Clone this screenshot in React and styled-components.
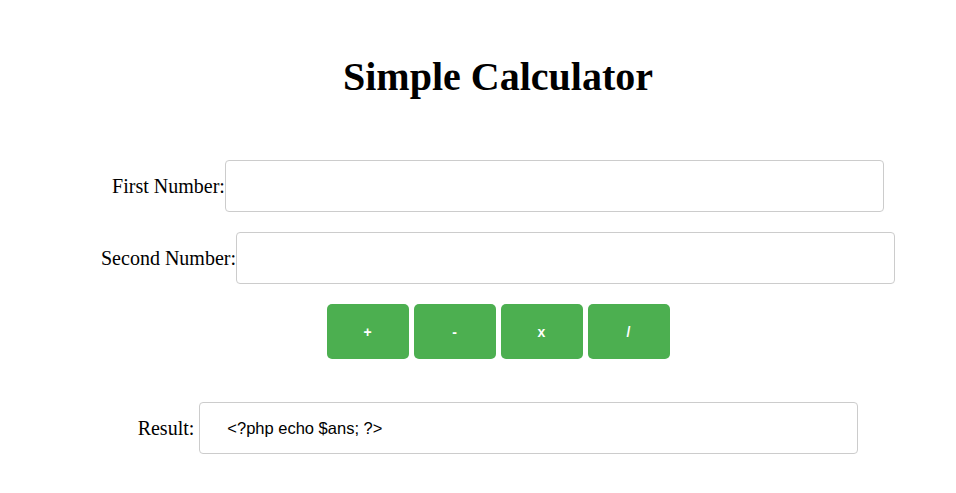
import React from 'react';
import styled, { createGlobalStyle } from 'styled-components';

const GlobalStyle = createGlobalStyle`
  body {
    margin: 8px;
    background: #fff;
    color: #000;
    font-family: "Liberation Serif", "Times New Roman", serif;
  }
`;

const Page = styled.div`
  display: flex;
  flex-direction: column;
  align-items: center;
  padding-left: 40px;
`;

const Title = styled.h1`
  margin: 46px 0 0;
  font-size: 40px;
  font-weight: bold;
  line-height: 46px;
`;

const Form = styled.form`
  display: flex;
  flex-direction: column;
  align-items: center;
  width: 100%;
  margin-top: 60px;
`;

const Row = styled.div`
  display: flex;
  align-items: center;
  justify-content: center;
  margin-bottom: ${(p) => p.$gap ?? 20}px;
`;

const Label = styled.label`
  font-size: 20px;
  margin-right: ${(p) => p.$space || 0}px;
`;

const Field = styled.input`
  box-sizing: border-box;
  width: 659px;
  height: 52px;
  padding: 0 12px 0 ${(p) => p.$indent || 12}px;
  border: 1px solid #ccc;
  border-radius: 4px;
  background: #fff;
  font-family: "Liberation Sans", Arial, sans-serif;
  font-size: 16.5px;
  color: #000;
  outline: none;
`;

const Buttons = styled.div`
  display: flex;
  justify-content: center;
  gap: 5px;
  margin-bottom: 43px;
`;

const OpButton = styled.button`
  width: 82px;
  height: 55px;
  border: none;
  border-radius: 5px;
  background: #4caf50;
  color: #fff;
  font-family: "Liberation Sans", Arial, sans-serif;
  font-size: 14px;
  font-weight: bold;
  cursor: pointer;
`;

const ops = ['+', '-', 'x', '/'];

const App = () => (
  <>
    <GlobalStyle />
    <Page>
      <Title>Simple Calculator</Title>
      <Form onSubmit={(e) => e.preventDefault()}>
        <Row>
          <Label htmlFor="first">First Number:</Label>
          <Field id="first" type="text" />
        </Row>
        <Row>
          <Label htmlFor="second">Second Number:</Label>
          <Field id="second" type="text" />
        </Row>
        <Buttons>
          {ops.map((op) => (
            <OpButton key={op} type="button">
              {op}
            </OpButton>
          ))}
        </Buttons>
        <Row $gap={0}>
          <Label htmlFor="result" $space={5}>
            Result:
          </Label>
          <Field id="result" type="text" $indent={27} defaultValue="<?php echo $ans; ?>" readOnly />
        </Row>
      </Form>
    </Page>
  </>
);

export default App;
